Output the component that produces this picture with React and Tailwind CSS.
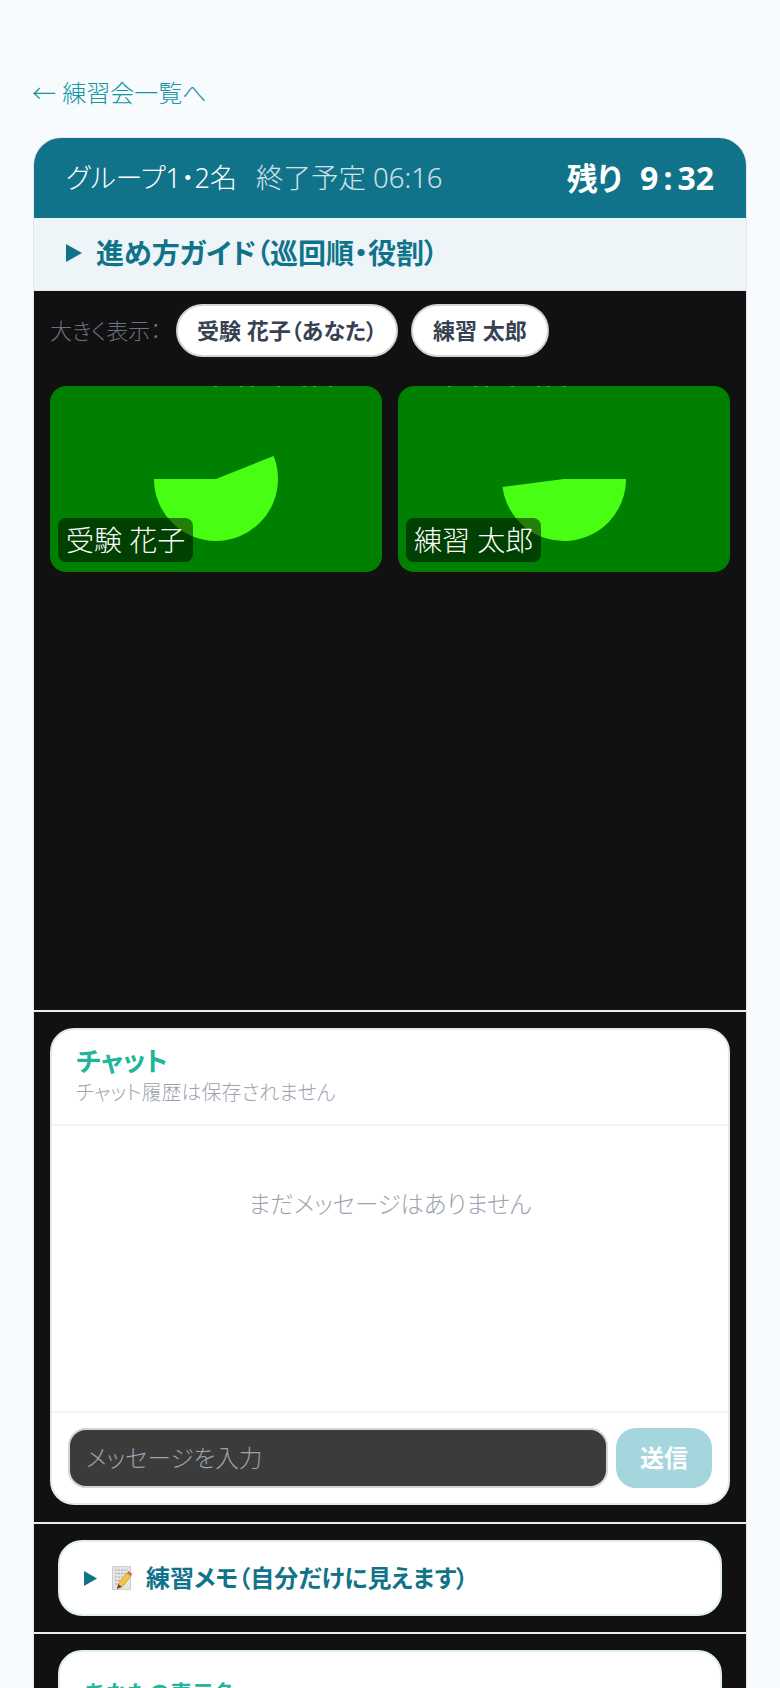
const Tri = ({ className }) => (
  <svg viewBox="0 0 16 20" preserveAspectRatio="none" className={className} aria-hidden="true">
    <polygon points="0,0 16,10 0,20" fill="#11738a" />
  </svg>
);

const Memo = () => (
  <svg viewBox="0 0 21 24" className="h-[24px] w-[21px] shrink-0" aria-hidden="true">
    <rect x="0" y="0" width="19" height="24" fill="#e4e4e4" />
    <rect x="0.5" y="0.5" width="18" height="23" fill="none" stroke="#cfcfcf" />
    <g stroke="#9a9a9a" strokeWidth="0.8" strokeDasharray="2 1">
      <line x1="3" y1="4" x2="16" y2="4" />
      <line x1="3" y1="7.5" x2="15" y2="7.5" />
      <line x1="3" y1="11" x2="12" y2="11" />
      <line x1="3" y1="14.5" x2="9" y2="14.5" />
      <line x1="3" y1="18" x2="6" y2="18" />
    </g>
    <polygon points="15,7 19,10 10,21 6,18" fill="#f5c542" stroke="#b98a1e" strokeWidth="0.6" />
    <polygon points="16.5,5 20.5,8 19,10 15,7" fill="#e0605a" />
    <polygon points="6,18 10,21 5,23" fill="#5a4a38" />
  </svg>
);

const Tile = ({ name, d, dots }) => (
  <div className="relative h-[186px] flex-1 overflow-hidden rounded-[16px] bg-[#008000]">
    <svg viewBox="0 0 332 186" className="absolute inset-0 h-full w-full" aria-hidden="true">
      <path d={d} fill="#48ff14" />
      {dots.map((x) => (
        <rect key={x} x={x} y="0" width="3" height="1" fill="#30c010" />
      ))}
    </svg>
    <div className="absolute bottom-[10px] left-[8px] rounded-[8px] bg-[rgba(0,0,0,0.5)] px-[8px] py-[4px] text-[28px] leading-[36px] font-light whitespace-nowrap text-white">
      {name}
    </div>
  </div>
);

export default function App() {
  return (
    <div className="h-[1688px] overflow-hidden bg-[#f7fbfd] px-[33px] pt-[76px] font-['Noto_Sans','Noto_Sans_CJK_JP',sans-serif] [font-feature-settings:'palt']">
      <a className="-ml-[1px] block h-[34px] text-[24px] leading-[34px] font-light text-[#1496a6]">← 練習会一覧へ</a>
      <div className="mt-[27px] overflow-hidden rounded-[28px] border border-[#e5e7eb] bg-white">
        <div className="flex h-[80px] items-center justify-between bg-[#11738a] pr-[32px] pl-[32px] text-white">
          <div className="flex items-baseline gap-[19px]">
            <span className="text-[27px] font-light">グループ1・2名</span>
            <span className="text-[27.5px] font-light text-white/80">終了予定 06:16</span>
          </div>
          <span className="flex items-baseline gap-[18px] font-bold">
            <span className="text-[31px]">残り</span>
            <span className="flex items-baseline text-[32px]">
              9<span className="mx-[5px]">:</span>32
            </span>
          </span>
        </div>
        <div className="flex h-[73px] items-center gap-[14px] border-b border-[#e5e7eb] bg-[#edf5f9] pb-[2px] pl-[32px]">
          <Tri className="h-[18px] w-[16px]" />
          <span className="text-[28px] font-bold text-[#11738a]">進め方ガイド（巡回順・役割）</span>
        </div>

        <div className="h-[719px] bg-[#111111] px-[16px] pt-[13px]">
          <div className="flex items-center gap-[13px]">
            <span className="w-[113px] shrink-0 text-[22px] font-light whitespace-nowrap text-[#6b7280]">大きく表示：</span>
            <button className="h-[53px] rounded-full border-2 border-[#d1d5db] bg-white px-[19px] text-[22px] font-bold text-[#374151]">
              受験 花子（あなた）
            </button>
            <button className="h-[53px] rounded-full border-2 border-[#d1d5db] bg-white px-[20px] text-[22px] font-bold text-[#374151]">
              練習 太郎
            </button>
          </div>
          <div className="mt-[29px] flex gap-[16px]">
            <Tile
              name="受験 花子"
              d="M104 93 A62 62 0 0 0 228 93 A62 62 0 0 0 223.6 70 L166 93 Z"
              dots={[164, 190, 201, 227, 253, 263, 279]}
            />
            <Tile
              name="練習 太郎"
              d="M228 93 A62 62 0 0 1 104.52 101.02 L166 93 Z"
              dots={[50, 76, 87, 113, 139, 149, 165]}
            />
          </div>
        </div>

        <div className="h-[2px] bg-[#eeeeee]" />

        <div className="h-[510px] bg-[#111111] px-[16px] pt-[16px]">
          <div className="flex h-[477px] flex-col overflow-hidden rounded-[24px] border-2 border-[#e5e7eb] bg-white">
            <div className="h-[96px] border-b-2 border-[#f3f4f6] px-[24px] pt-[14px]">
              <div className="text-[26.5px] leading-[34px] font-bold text-[#22b59a]">チャット</div>
              <div className="mt-[1px] text-[20px] leading-[28px] font-light text-[#9ca3af]">チャット履歴は保存されません</div>
            </div>
            <div className="flex-1 pt-[61px] text-center text-[23.4px] leading-[34px] font-light text-[#9ca3af]">
              まだメッセージはありません
            </div>
            <div className="flex h-[92px] gap-[8px] border-t-2 border-[#f3f4f6] px-[16px] pt-[15px]">
              <input
                placeholder="メッセージを入力"
                className="h-[60px] min-w-0 flex-1 rounded-[18px] border-2 border-[#d1d5db] bg-[#3b3b3b] px-[16px] text-[23.6px] font-light text-white outline-none placeholder:text-[#9ca3af]"
              />
              <button className="h-[60px] w-[96px] rounded-[20px] bg-[#a5d5dd] text-[24px] font-bold text-white">送信</button>
            </div>
          </div>
        </div>

        <div className="h-[2px] bg-[#eeeeee]" />

        <div className="h-[108px] bg-[#111111] px-[24px] pt-[16px]">
          <div className="flex h-[76px] items-center rounded-[24px] border-2 border-[#dfeef0] bg-white pl-[24px]">
            <Tri className="h-[15px] w-[13px]" />
            <span className="ml-[15px]"><Memo /></span>
            <span className="ml-[13px] text-[24px] font-bold text-[#11738a]">練習メモ（自分だけに見えます）</span>
          </div>
        </div>

        <div className="h-[2px] bg-[#eeeeee]" />

        <div className="h-[200px] bg-[#111111] px-[24px] pt-[16px]">
          <div className="h-[160px] rounded-[24px] border-2 border-[#dfeef0] bg-white px-[24px] pt-[25px]">
            <div className="text-[22px] leading-[30px] font-bold text-[#22b59a]">あなたの表示名</div>
          </div>
        </div>
      </div>
    </div>
  );
}
